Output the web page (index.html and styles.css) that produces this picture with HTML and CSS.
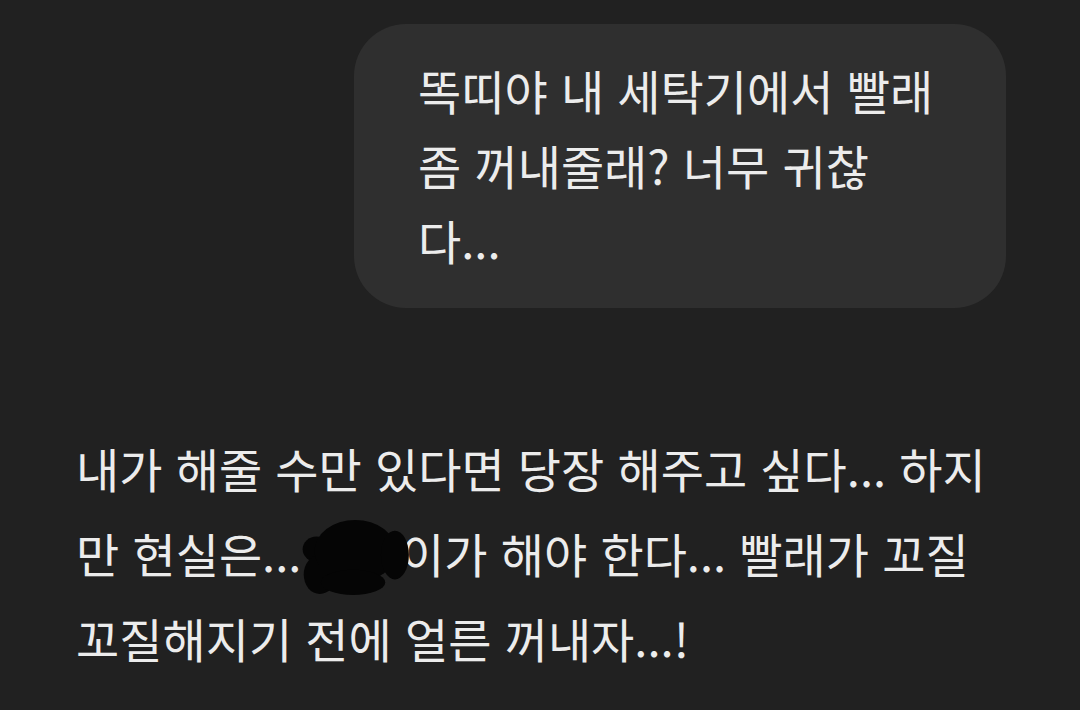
FILE: index.html
```html
<!DOCTYPE html>
<html lang="ko">
<head>
    <meta charset="UTF-8">
    <title>대화</title>
    <link rel="stylesheet" href="styles.css">
</head>
<body>
<div class="thread">
    <div class="user-row">
        <div class="bubble">똑띠야 내 세탁기에서 빨래 좀 꺼내줄래? 너무 귀찮다...</div>
    </div>
    <div class="reply">
        내가 해줄 수만 있다면 당장 해주고 싶다... 하지만 현실은... <span class="redacted">똑띠<svg class="scribble" viewBox="0 0 110 82" preserveAspectRatio="none" aria-hidden="true">
            <circle cx="22" cy="32" r="13" />
            <ellipse cx="25" cy="58" rx="15" ry="20" />
            <ellipse cx="58" cy="34" rx="38" ry="32" />
            <ellipse cx="56" cy="66" rx="30" ry="13" />
            <ellipse cx="95" cy="38" rx="13" ry="25" />
        </svg></span>이가 해야 한다... 빨래가 꼬질꼬질해지기 전에 얼른 꺼내자...!
    </div>
</div>
</body>
</html>
```

FILE: styles.css
```css
html, body {
    margin: 0;
    background: #212121;
}

body {
    color: #ececec;
    font-family: "Noto Sans CJK KR", "Noto Sans", sans-serif;
    font-size: 47px;
}

.thread {
    padding: 24px 74px 0 76px;
}

.user-row {
    display: flex;
    justify-content: flex-end;
}

.bubble {
    box-sizing: border-box;
    width: 652px;
    padding: 28px 64px 31px;
    background: #2f2f2f;
    border-radius: 52px;
    line-height: 75px;
}

.reply {
    margin-top: 117px;
    line-height: 85px;
}

.redacted {
    position: relative;
}

.scribble {
    position: absolute;
    left: -22px;
    top: 0;
    width: 118px;
    height: 80px;
    fill: #050505;
}
```
